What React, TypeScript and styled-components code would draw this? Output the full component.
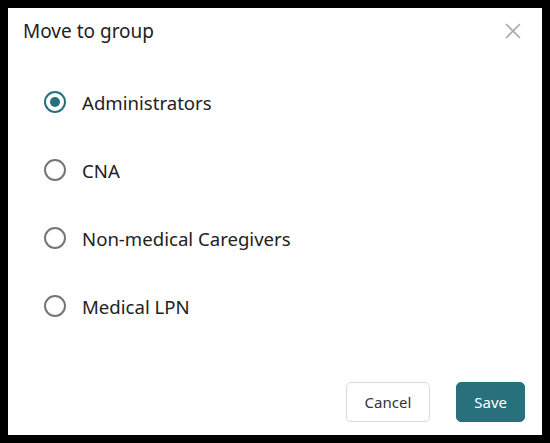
import React, { useState } from 'react';
import styled, { createGlobalStyle } from 'styled-components';

const GlobalStyle = createGlobalStyle`
    html, body {
        margin: 0;
        background: #000;
    }
    body {
        padding: 8px;
        font-family: "Noto Sans", "Open Sans", sans-serif;
    }
`;

const Dialog = styled.div`
    width: 534px;
    height: 427px;
    background: #fff;
    display: flex;
    flex-direction: column;
    box-sizing: border-box;
`;

const Header = styled.div`
    display: flex;
    justify-content: space-between;
    align-items: center;
    padding: 4px 20px 0 15px;
    height: 38px;
`;

const Title = styled.h2`
    margin: 0;
    font-size: 19px;
    font-weight: 400;
    color: #222;
`;

const CloseButton = styled.button`
    border: none;
    background: none;
    padding: 0;
    width: 18px;
    height: 18px;
    display: flex;
    align-items: center;
    justify-content: center;
    cursor: pointer;
`;

const Options = styled.div`
    flex: 1;
    display: flex;
    flex-direction: column;
    gap: 40px;
    padding: 38px 0 0 36px;
`;

const Option = styled.label`
    display: flex;
    align-items: center;
    gap: 16px;
    height: 28px;
    font-size: 18.6px;
    color: #222;
    cursor: pointer;
`;

const Radio = styled.span<{ $checked: boolean }>`
    width: 22px;
    height: 22px;
    box-sizing: border-box;
    border-radius: 50%;
    border: 2px solid ${p => (p.$checked ? '#28707c' : '#767676')};
    display: flex;
    align-items: center;
    justify-content: center;

    &::after {
        content: '';
        width: 10px;
        height: 10px;
        border-radius: 50%;
        background: #28707c;
        display: ${p => (p.$checked ? 'block' : 'none')};
    }
`;

const Footer = styled.div`
    display: flex;
    justify-content: flex-end;
    gap: 26px;
    padding: 0 17px 13px 0;
`;

const Button = styled.button<{ $primary?: boolean }>`
    height: 40px;
    padding: 0 ${p => (p.$primary ? 17 : 18)}px;
    border-radius: 5px;
    font-family: inherit;
    font-size: 15px;
    cursor: pointer;
    border: 1px solid ${p => (p.$primary ? '#28707c' : '#d6d9de')};
    background: ${p => (p.$primary ? '#28707c' : '#fff')};
    color: ${p => (p.$primary ? '#fff' : '#333')};
`;

const groups = ['Administrators', 'CNA', 'Non-medical Caregivers', 'Medical LPN'];

const App = () => {
    const [selected, setSelected] = useState('Administrators');

    return (
        <>
            <GlobalStyle />
            <Dialog>
                <Header>
                    <Title>Move to group</Title>
                    <CloseButton aria-label="Close">
                        <svg width="16" height="16" viewBox="0 0 16 16">
                            <path d="M1 1 L15 15 M15 1 L1 15" stroke="#a3aab3" strokeWidth="1.6" />
                        </svg>
                    </CloseButton>
                </Header>
                <Options>
                    {groups.map(g => (
                        <Option key={g} onClick={() => setSelected(g)}>
                            <Radio $checked={selected === g} />
                            {g}
                        </Option>
                    ))}
                </Options>
                <Footer>
                    <Button>Cancel</Button>
                    <Button $primary>Save</Button>
                </Footer>
            </Dialog>
        </>
    );
};

export default App;
